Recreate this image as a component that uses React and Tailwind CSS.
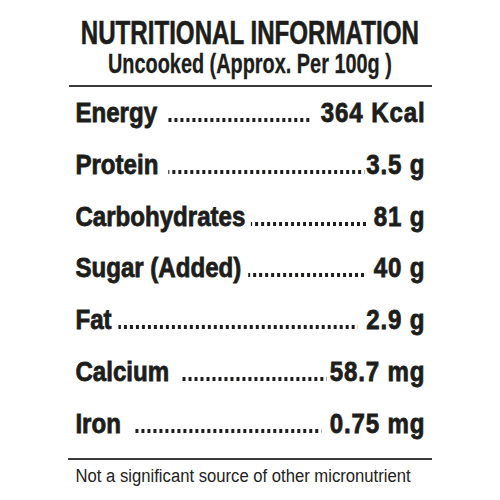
import React from "react";

const rows = [
  { label: "Energy", value: "364 Kcal", gap: "ml-[12px] mr-[10px]" },
  { label: "Protein", value: "3.5 g", gap: "ml-[12px] mr-[2px]" },
  { label: "Carbohydrates", value: "81 g", gap: "ml-[6px] mr-[6px]" },
  { label: "Sugar (Added)", value: "40 g", gap: "ml-[8px] mr-[8px]" },
  { label: "Fat", value: "2.9 g", gap: "ml-[8px] mr-[10px]" },
  { label: "Calcium", value: "58.7 mg", gap: "ml-[14px] mr-[4px]" },
  { label: "Iron", value: "0.75 mg", gap: "ml-[14px] mr-[10px]" },
];

export default function App() {
  return (
    <div className="w-[500px] h-[500px] overflow-hidden bg-white text-[#1d1d1b] flex flex-col items-center pt-[16px] font-['Liberation_Sans',Arial,sans-serif]">
      <h1 className="text-[33.5px] font-bold leading-[34px] whitespace-nowrap scale-x-[0.72] [-webkit-text-stroke:0.6px_#1d1d1b]">
        NUTRITIONAL INFORMATION
      </h1>
      <p className="text-[28px] font-bold leading-[28px] whitespace-nowrap scale-x-[0.71] [-webkit-text-stroke:0.3px_#1d1d1b]">
        Uncooked (Approx. Per 100g )
      </p>
      <div className="w-[363px] h-[2px] bg-[#3a3a3a] mt-[7px] shrink-0" />

      <div className="w-[406px] shrink-0 flex flex-col scale-x-[0.86]">
        {rows.map((r) => (
          <div
            key={r.label}
            className="flex items-baseline h-[51.8px] leading-[52px] text-[28px] font-bold [-webkit-text-stroke:0.8px_#1d1d1b]"
          >
            <span className="whitespace-nowrap">{r.label}</span>
            <span
              className={`flex-1 h-[4px] bg-[linear-gradient(to_right,#1d1d1b_4px,transparent_4px)] bg-[length:6.98px_4px] bg-repeat-x bg-right ${r.gap}`}
            />
            <span className="whitespace-nowrap tracking-[1px] -mr-[1px]">{r.value}</span>
          </div>
        ))}
      </div>

      <div className="w-[364px] h-[2px] bg-[#3a3a3a] mt-[8px] shrink-0" />
      <p className="text-[18px] leading-[22px] mt-[5px] mr-[14px] whitespace-nowrap scale-x-[0.925] text-[#222]">
        Not a significant source of other micronutrient
      </p>
    </div>
  );
}
